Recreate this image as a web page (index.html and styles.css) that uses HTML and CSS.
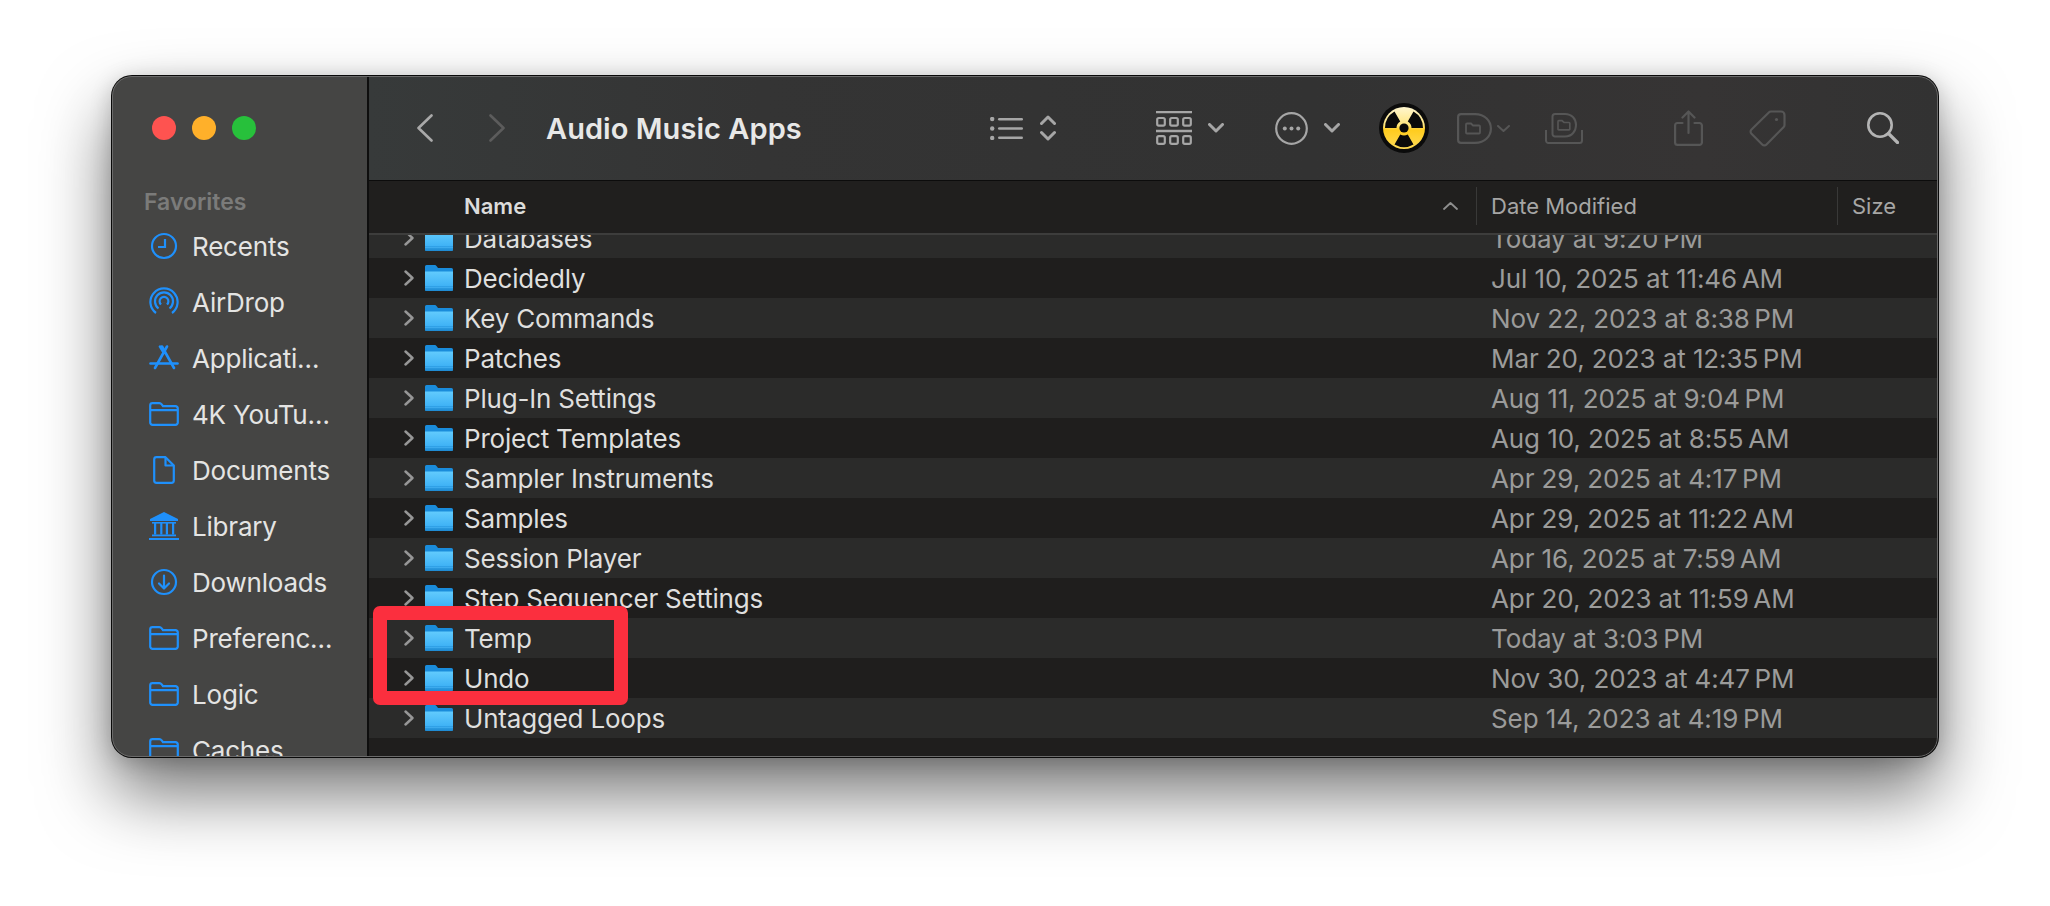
FILE: index.html
```html
<!DOCTYPE html>
<html lang="en">
<head>
<meta charset="utf-8">
<title>Audio Music Apps</title>
<link rel="stylesheet" href="styles.css">
</head>
<body>
<svg class="defs" aria-hidden="true">
  <defs>
    <linearGradient id="fbody" x1="0" y1="0" x2="0" y2="1">
      <stop offset="0" stop-color="#62cbfd"/>
      <stop offset="0.75" stop-color="#3fb2f6"/>
      <stop offset="0.76" stop-color="#2d9fe6"/>
      <stop offset="0.84" stop-color="#42aff0"/>
      <stop offset="0.85" stop-color="#2a9ae0"/>
      <stop offset="1" stop-color="#1d8ad2"/>
    </linearGradient>
    <linearGradient id="nuke" x1="0" y1="0" x2="0" y2="1">
      <stop offset="0" stop-color="#fff6cf"/>
      <stop offset="0.42" stop-color="#ffe680"/>
      <stop offset="0.55" stop-color="#ffcc1e"/>
      <stop offset="1" stop-color="#ffdb55"/>
    </linearGradient>
    <symbol id="folder" viewBox="0 0 28 26">
      <path d="M1.5 0H9.5C10.5 0 11 .4 11.7 1.2L13 3H26.5A1.5 1.5 0 0 1 28 4.5V24.5A1.5 1.5 0 0 1 26.5 26H1.5A1.5 1.5 0 0 1 0 24.5V1.5A1.5 1.5 0 0 1 1.5 0Z" fill="#1a8cdb"/>
      <path d="M0 6.5H28V24.5A1.5 1.5 0 0 1 26.5 26H1.5A1.5 1.5 0 0 1 0 24.5Z" fill="url(#fbody)"/>
    </symbol>
    <symbol id="chev" viewBox="0 0 10 16">
      <path d="M1.5 1.5L8.5 8L1.5 14.5" fill="none" stroke="#979797" stroke-width="2.4" stroke-linecap="round" stroke-linejoin="round"/>
    </symbol>
    <symbol id="sfolder" viewBox="0 0 30 24">
      <path d="M1.2 20V3.5A2.3 2.3 0 0 1 3.5 1.2H10.5C11.5 1.2 12 1.6 12.7 2.4L14 4.2H26.5A2.3 2.3 0 0 1 28.8 6.5V20.5A2.3 2.3 0 0 1 26.5 22.8H3.5A2.3 2.3 0 0 1 1.2 20.5ZM1.2 8.2H28.8" fill="none" stroke="#1f90fb" stroke-width="2.2"/>
    </symbol>
    <symbol id="down" viewBox="0 0 16 10">
      <path d="M1.5 1.5L8 8L14.5 1.5" fill="none" stroke="#a6a6a6" stroke-width="3" stroke-linecap="round" stroke-linejoin="round"/>
    </symbol>
  </defs>
</svg>

<main class="window">
  <aside class="sidebar">
    <div class="lights">
      <span class="light light-red"></span>
      <span class="light light-yellow"></span>
      <span class="light light-green"></span>
    </div>
    <h2 class="side-title">Favorites</h2>
    <ul class="side-list">
      <li class="side-item">
        <span class="side-icon"><svg width="28" height="28" viewBox="0 0 28 28" fill="none" stroke="#1f90fb" stroke-width="2.2"><circle cx="14" cy="14" r="12"/><path d="M15 7V15H8"/></svg></span>
        Recents
      </li>
      <li class="side-item">
        <span class="side-icon"><svg width="30" height="30" viewBox="0 0 30 30" fill="none" stroke="#1f90fb" stroke-width="2.2"><path d="M7 26A13.6 13.6 0 1 1 23 26"/><path d="M9.5 21.5A9 9 0 1 1 20.5 21.5"/><path d="M12 17.5A4.4 4.4 0 1 1 18 17.5"/><path d="M15 15.5L15 15.6" stroke-width="3"/></svg></span>
        AirDrop
      </li>
      <li class="side-item">
        <span class="side-icon"><svg width="30" height="26" viewBox="0 0 30 26" fill="none" stroke="#1f90fb" stroke-width="2.6" stroke-linecap="round"><path d="M11 1.5L15 8"/><path d="M18 1.5L6 23"/><path d="M13 1.5L25 23"/><path d="M1.5 18.5H28.5"/></svg></span>
        Applicati…
      </li>
      <li class="side-item">
        <span class="side-icon"><svg width="30" height="24"><use href="#sfolder"/></svg></span>
        4K YouTu…
      </li>
      <li class="side-item">
        <span class="side-icon"><svg width="22" height="28" viewBox="0 0 22 28" fill="none" stroke="#1f90fb" stroke-width="2.2" stroke-linejoin="round"><path d="M3.5 1.2H12.5L20.8 9.5V24.5A2.3 2.3 0 0 1 18.5 26.8H3.5A2.3 2.3 0 0 1 1.2 24.5V3.5A2.3 2.3 0 0 1 3.5 1.2Z"/><path d="M12.5 1.2V9.5H20.8"/></svg></span>
        Documents
      </li>
      <li class="side-item">
        <span class="side-icon"><svg width="30" height="28" viewBox="0 0 30 28" fill="#1f90fb"><path d="M15 0L29 7V9H1V7Z"/><rect x="3" y="10" width="8" height="1.6"/><rect x="11" y="10" width="8" height="1.6"/><rect x="19" y="10" width="8" height="1.6"/><rect x="5" y="11" width="2.2" height="11.5"/><rect x="11.2" y="11" width="2.2" height="11.5"/><rect x="16.8" y="11" width="2.2" height="11.5"/><rect x="23" y="11" width="2.2" height="11.5"/><rect x="3" y="22.5" width="24" height="1.8"/><rect x="0" y="26" width="30" height="2"/></svg></span>
        Library
      </li>
      <li class="side-item">
        <span class="side-icon"><svg width="28" height="28" viewBox="0 0 28 28" fill="none" stroke="#1f90fb" stroke-width="2.2" stroke-linecap="round" stroke-linejoin="round"><circle cx="14" cy="14" r="12"/><path d="M14 7.5V20M9 15.5L14 20.5L19 15.5"/></svg></span>
        Downloads
      </li>
      <li class="side-item">
        <span class="side-icon"><svg width="30" height="24"><use href="#sfolder"/></svg></span>
        Preferenc…
      </li>
      <li class="side-item">
        <span class="side-icon"><svg width="30" height="24"><use href="#sfolder"/></svg></span>
        Logic
      </li>
      <li class="side-item">
        <span class="side-icon"><svg width="30" height="24"><use href="#sfolder"/></svg></span>
        Caches
      </li>
    </ul>
  </aside>

  <section class="content">
    <header class="toolbar">
      <svg class="tb-back" width="16" height="28" viewBox="0 0 16 28" fill="none" stroke="#a9a9a9" stroke-width="2.6" stroke-linecap="round" stroke-linejoin="round"><path d="M14.5 1.5L1.5 14L14.5 26.5"/></svg>
      <svg class="tb-forward" width="16" height="28" viewBox="0 0 16 28" fill="none" stroke="#5c5c5c" stroke-width="2.6" stroke-linecap="round" stroke-linejoin="round"><path d="M1.5 1.5L14.5 14L1.5 26.5"/></svg>
      <h1 class="title">Audio Music Apps</h1>
      <svg class="tb-list" width="33" height="23" viewBox="0 0 33 23" fill="#a6a6a6"><circle cx="2.2" cy="2" r="2.2"/><circle cx="2.2" cy="11.5" r="2.2"/><circle cx="2.2" cy="21" r="2.2"/><rect x="8" y="1" width="25" height="2.4" rx="1.2"/><rect x="8" y="10.3" width="25" height="2.4" rx="1.2"/><rect x="8" y="19.6" width="25" height="2.4" rx="1.2"/></svg>
      <svg class="tb-updown" width="16" height="26" viewBox="0 0 16 26" fill="none" stroke="#a6a6a6" stroke-width="3" stroke-linecap="round" stroke-linejoin="round"><path d="M1.5 8.5L8 2L14.5 8.5"/><path d="M1.5 17.5L8 24L14.5 17.5"/></svg>
      <svg class="tb-gallery" width="36" height="34" viewBox="0 0 36 34" fill="none" stroke="#a6a6a6" stroke-width="2.2"><path d="M0 1H36M0 20H36" stroke-width="2.4"/><rect x="1.2" y="7" width="7.6" height="7.6" rx="1.6"/><rect x="14.2" y="7" width="7.6" height="7.6" rx="1.6"/><rect x="27.2" y="7" width="7.6" height="7.6" rx="1.6"/><rect x="1.2" y="25.2" width="7.6" height="7.6" rx="1.6"/><rect x="14.2" y="25.2" width="7.6" height="7.6" rx="1.6"/><rect x="27.2" y="25.2" width="7.6" height="7.6" rx="1.6"/></svg>
      <svg class="tb-chev1" width="16" height="10"><use href="#down"/></svg>
      <svg class="tb-more" width="33" height="33" viewBox="0 0 33 33" fill="#a6a6a6"><circle cx="16.5" cy="16.5" r="15.3" fill="none" stroke="#a6a6a6" stroke-width="2.2"/><circle cx="9.8" cy="16.5" r="2"/><circle cx="16.5" cy="16.5" r="2"/><circle cx="23.2" cy="16.5" r="2"/></svg>
      <svg class="tb-chev2" width="16" height="10"><use href="#down"/></svg>
      <svg class="tb-nuke" width="50" height="50" viewBox="-25 -25 50 50"><circle r="25" fill="#0b0b0b"/><circle r="21" fill="url(#nuke)"/><g fill="#0a0a0a"><path d="M3.75 6.5L9.5 16.45A19 19 0 0 1 -9.5 16.45L-3.75 6.5A7.5 7.5 0 0 0 3.75 6.5Z"/><path d="M3.75 6.5L9.5 16.45A19 19 0 0 1 -9.5 16.45L-3.75 6.5A7.5 7.5 0 0 0 3.75 6.5Z" transform="rotate(120)"/><path d="M3.75 6.5L9.5 16.45A19 19 0 0 1 -9.5 16.45L-3.75 6.5A7.5 7.5 0 0 0 3.75 6.5Z" transform="rotate(240)"/><circle r="4.6"/></g></svg>
      <svg class="tb-d" width="35" height="31" viewBox="0 0 35 31" fill="none" stroke="#565656" stroke-width="2.2"><path d="M4 1.1H18C28 1.1 33.9 8 33.9 15.5C33.9 23 28 29.9 18 29.9H4A2.9 2.9 0 0 1 1.1 27V4A2.9 2.9 0 0 1 4 1.1Z"/><path d="M9 19.5V11.5A1 1 0 0 1 10 10.5H14L16 12.5H22A1 1 0 0 1 23 13.5V19.5A1 1 0 0 1 22 20.5H10A1 1 0 0 1 9 19.5Z" stroke-width="1.8"/></svg>
      <svg class="tb-dchev" width="13" height="7" viewBox="0 0 13 7" fill="none" stroke="#565656" stroke-width="2" stroke-linecap="round" stroke-linejoin="round"><path d="M1 1L6.5 6L12 1"/></svg>
      <svg class="tb-d2" width="38" height="31" viewBox="0 0 38 31" fill="none" stroke="#565656" stroke-width="2"><path d="M10 1H20C27 1 31 6 31 12C31 18 27 23.5 20 23.5H10A2.5 2.5 0 0 1 7.5 21V3.5A2.5 2.5 0 0 1 10 1Z"/><path d="M13 16V8.5A.8.8 0 0 1 13.8 7.7H17L19 9.5H24A.8.8 0 0 1 24.8 10.3V16A.8.8 0 0 1 24 16.8H13.8A.8.8 0 0 1 13 16Z" stroke-width="1.7"/><path d="M1 17V27.5A2.5 2.5 0 0 0 3.5 30H34.5A2.5 2.5 0 0 0 37 27.5V17"/></svg>
      <svg class="tb-share" width="29" height="36" viewBox="0 0 29 36" fill="none" stroke="#565656" stroke-width="2.2" stroke-linecap="round" stroke-linejoin="round"><path d="M8.5 13H3.5A2.4 2.4 0 0 0 1.1 15.4V32.5A2.4 2.4 0 0 0 3.5 34.9H25.5A2.4 2.4 0 0 0 27.9 32.5V15.4A2.4 2.4 0 0 0 25.5 13H20.5"/><path d="M14.5 23V1.5M8.5 7.5L14.5 1.5L20.5 7.5"/></svg>
      <svg class="tb-tag" width="37" height="37" viewBox="0 0 37 37" fill="none" stroke="#565656" stroke-width="2.2" stroke-linejoin="round"><path d="M22 1.5H32A3.5 3.5 0 0 1 35.5 5V15A3 3 0 0 1 34.5 17.2L17.5 34.5A3 3 0 0 1 13.2 34.5L2.5 23.8A3 3 0 0 1 2.5 19.5L19.8 2.5A3 3 0 0 1 22 1.5Z"/><circle cx="27.5" cy="9.5" r="1.6" fill="#565656" stroke="none"/></svg>
      <svg class="tb-search" width="32" height="32" viewBox="0 0 32 32" fill="none" stroke="#b4b4b4" stroke-width="2.6" stroke-linecap="round"><circle cx="13" cy="13" r="11.7"/><path d="M21.5 21.5L30.5 30.5" stroke-width="3.2"/></svg>
    </header>

    <div class="columns">
      <div class="col col-name">Name
        <svg class="sort" width="15" height="8" viewBox="0 0 15 8" fill="none" stroke="#8e8e8e" stroke-width="1.8" stroke-linecap="round" stroke-linejoin="round"><path d="M1 7L7.5 1L14 7"/></svg>
      </div>
      <div class="col col-date">Date Modified</div>
      <div class="col col-size">Size</div>
    </div>

    <div class="viewport">
      <div class="rows">
        <div class="row"><svg class="row-chev" width="10" height="16"><use href="#chev"/></svg><svg class="folder" width="28" height="26"><use href="#folder"/></svg><span class="row-name">Databases</span><span class="row-date">Today at 9:20&#8239;PM</span></div>
        <div class="row"><svg class="row-chev" width="10" height="16"><use href="#chev"/></svg><svg class="folder" width="28" height="26"><use href="#folder"/></svg><span class="row-name">Decidedly</span><span class="row-date">Jul 10, 2025 at 11:46&#8239;AM</span></div>
        <div class="row"><svg class="row-chev" width="10" height="16"><use href="#chev"/></svg><svg class="folder" width="28" height="26"><use href="#folder"/></svg><span class="row-name">Key Commands</span><span class="row-date">Nov 22, 2023 at 8:38&#8239;PM</span></div>
        <div class="row"><svg class="row-chev" width="10" height="16"><use href="#chev"/></svg><svg class="folder" width="28" height="26"><use href="#folder"/></svg><span class="row-name">Patches</span><span class="row-date">Mar 20, 2023 at 12:35&#8239;PM</span></div>
        <div class="row"><svg class="row-chev" width="10" height="16"><use href="#chev"/></svg><svg class="folder" width="28" height="26"><use href="#folder"/></svg><span class="row-name">Plug-In Settings</span><span class="row-date">Aug 11, 2025 at 9:04&#8239;PM</span></div>
        <div class="row"><svg class="row-chev" width="10" height="16"><use href="#chev"/></svg><svg class="folder" width="28" height="26"><use href="#folder"/></svg><span class="row-name">Project Templates</span><span class="row-date">Aug 10, 2025 at 8:55&#8239;AM</span></div>
        <div class="row"><svg class="row-chev" width="10" height="16"><use href="#chev"/></svg><svg class="folder" width="28" height="26"><use href="#folder"/></svg><span class="row-name">Sampler Instruments</span><span class="row-date">Apr 29, 2025 at 4:17&#8239;PM</span></div>
        <div class="row"><svg class="row-chev" width="10" height="16"><use href="#chev"/></svg><svg class="folder" width="28" height="26"><use href="#folder"/></svg><span class="row-name">Samples</span><span class="row-date">Apr 29, 2025 at 11:22&#8239;AM</span></div>
        <div class="row"><svg class="row-chev" width="10" height="16"><use href="#chev"/></svg><svg class="folder" width="28" height="26"><use href="#folder"/></svg><span class="row-name">Session Player</span><span class="row-date">Apr 16, 2025 at 7:59&#8239;AM</span></div>
        <div class="row"><svg class="row-chev" width="10" height="16"><use href="#chev"/></svg><svg class="folder" width="28" height="26"><use href="#folder"/></svg><span class="row-name">Step Sequencer Settings</span><span class="row-date">Apr 20, 2023 at 11:59&#8239;AM</span></div>
        <div class="row"><svg class="row-chev" width="10" height="16"><use href="#chev"/></svg><svg class="folder" width="28" height="26"><use href="#folder"/></svg><span class="row-name">Temp</span><span class="row-date">Today at 3:03&#8239;PM</span></div>
        <div class="row"><svg class="row-chev" width="10" height="16"><use href="#chev"/></svg><svg class="folder" width="28" height="26"><use href="#folder"/></svg><span class="row-name">Undo</span><span class="row-date">Nov 30, 2023 at 4:47&#8239;PM</span></div>
        <div class="row"><svg class="row-chev" width="10" height="16"><use href="#chev"/></svg><svg class="folder" width="28" height="26"><use href="#folder"/></svg><span class="row-name">Untagged Loops</span><span class="row-date">Sep 14, 2023 at 4:19&#8239;PM</span></div>
      </div>
    </div>
  </section>

  <div class="callout"></div>
</main>
</body>
</html>
```
FILE: styles.css
```css
* { box-sizing: border-box; }

html, body { height: 100%; }

body {
  margin: 0;
  padding: 76px 0 0 112px;
  background: #fff;
  overflow: hidden;
  font-family: "Inter", "Liberation Sans", sans-serif;
}

.defs { position: absolute; width: 0; height: 0; }

.window {
  position: relative;
  display: flex;
  width: 1826px;
  height: 681px;
  border-radius: 20px;
  overflow: hidden;
  background: #1f1e1d;
  box-shadow: 0 0 0 1px #0a0a0a, 0 36px 70px rgba(0, 0, 0, .55), 0 4px 22px rgba(0, 0, 0, .2);
}

.window::after {
  content: "";
  position: absolute;
  inset: 0;
  border: 1px solid #6a6a6a;
  border-radius: 20px;
  pointer-events: none;
}

/* Sidebar */
.sidebar {
  flex: 0 0 257px;
  background: #454544;
  border-right: 2px solid #0e0e0e;
  overflow: hidden;
}

.lights {
  display: flex;
  gap: 16px;
  padding: 40px 0 0 40px;
}

.light { width: 24px; height: 24px; border-radius: 50%; }
.light-red { background: #fe5350; }
.light-yellow { background: #ffb02a; }
.light-green { background: #27c03b; }

.side-title {
  margin: 0;
  padding: 49px 0 0 32px;
  height: 78px;
  font-size: 23px;
  line-height: 26px;
  font-weight: 600;
  color: #7b7b7a;
}

.side-list {
  list-style: none;
  margin: 0;
  padding: 0;
}

.side-item {
  display: flex;
  align-items: center;
  height: 56px;
  padding-left: 36px;
  font-size: 26px;
  letter-spacing: -.2px;
  color: #e4e4e3;
  white-space: nowrap;
}

.side-icon {
  display: flex;
  align-items: center;
  justify-content: center;
  flex: 0 0 32px;
  margin-right: 12px;
}

/* Content */
.content {
  flex: 1;
  min-width: 0;
  display: flex;
  flex-direction: column;
}

.toolbar {
  flex: 0 0 105px;
  display: flex;
  align-items: center;
  padding: 0 0 0 48px;
  background: linear-gradient(90deg, #373a3a 0%, #343434 25%, #323232 60%, #363434 85%, #323232 100%);
  border-bottom: 1px solid #0c0c0c;
}

.tb-forward { margin-left: 56px; }

.title {
  flex: 0 0 444px;
  margin: 0 0 0 41px;
  font-size: 29px;
  font-weight: 600;
  letter-spacing: .05px;
  color: #e8e8e7;
}

.tb-updown { margin-left: 17px; }
.tb-gallery { margin-left: 100px; }
.tb-chev1 { margin-left: 16px; }
.tb-more { margin-left: 51px; }
.tb-chev2 { margin-left: 16px; }
.tb-nuke { margin-left: 39px; }
.tb-d { margin-left: 28px; }
.tb-dchev { margin-left: 5px; }
.tb-d2 { margin-left: 35px; }
.tb-share { margin-left: 91px; }
.tb-tag { margin-left: 46px; }
.tb-search { margin-left: 81px; }

.columns {
  flex: 0 0 54px;
  display: grid;
  grid-template-columns: 1107px 361px 1fr;
  align-items: center;
  padding-bottom: 3px;
  background: #201f1e;
  border-bottom: 2px solid #3d3d3c;
}

.col {
  display: flex;
  align-items: center;
  height: 38px;
  font-size: 22px;
  color: #a6a6a5;
  white-space: nowrap;
}

.col-name {
  justify-content: space-between;
  padding: 0 18px 0 95px;
  font-weight: 600;
  color: #dcdcdb;
}

.col-date, .col-size {
  padding-left: 14px;
  border-left: 1px solid #393938;
}

.viewport {
  flex: 1;
  min-height: 0;
  overflow: hidden;
}

.rows { margin-top: -17px; }

.row {
  display: grid;
  grid-template-columns: 56px 28px 1038px auto;
  align-items: center;
  height: 40px;
}

.row:nth-child(odd) { background: #2b2b2a; }
.row:nth-child(even) { background: #1f1e1d; }

.row-chev { justify-self: end; margin-right: 11px; }

.row-name {
  padding-left: 11px;
  font-size: 26px;
  letter-spacing: -.2px;
  color: #dfdfde;
  white-space: nowrap;
}

.row-date {
  font-size: 26px;
  letter-spacing: -.1px;
  color: #9b9b9a;
  white-space: nowrap;
}

/* Red annotation frame drawn over the list */
.callout {
  position: absolute;
  left: 261px;
  top: 530px;
  width: 255px;
  height: 99px;
  border: 14px solid #fb2f3e;
  border-radius: 7px;
}
```
